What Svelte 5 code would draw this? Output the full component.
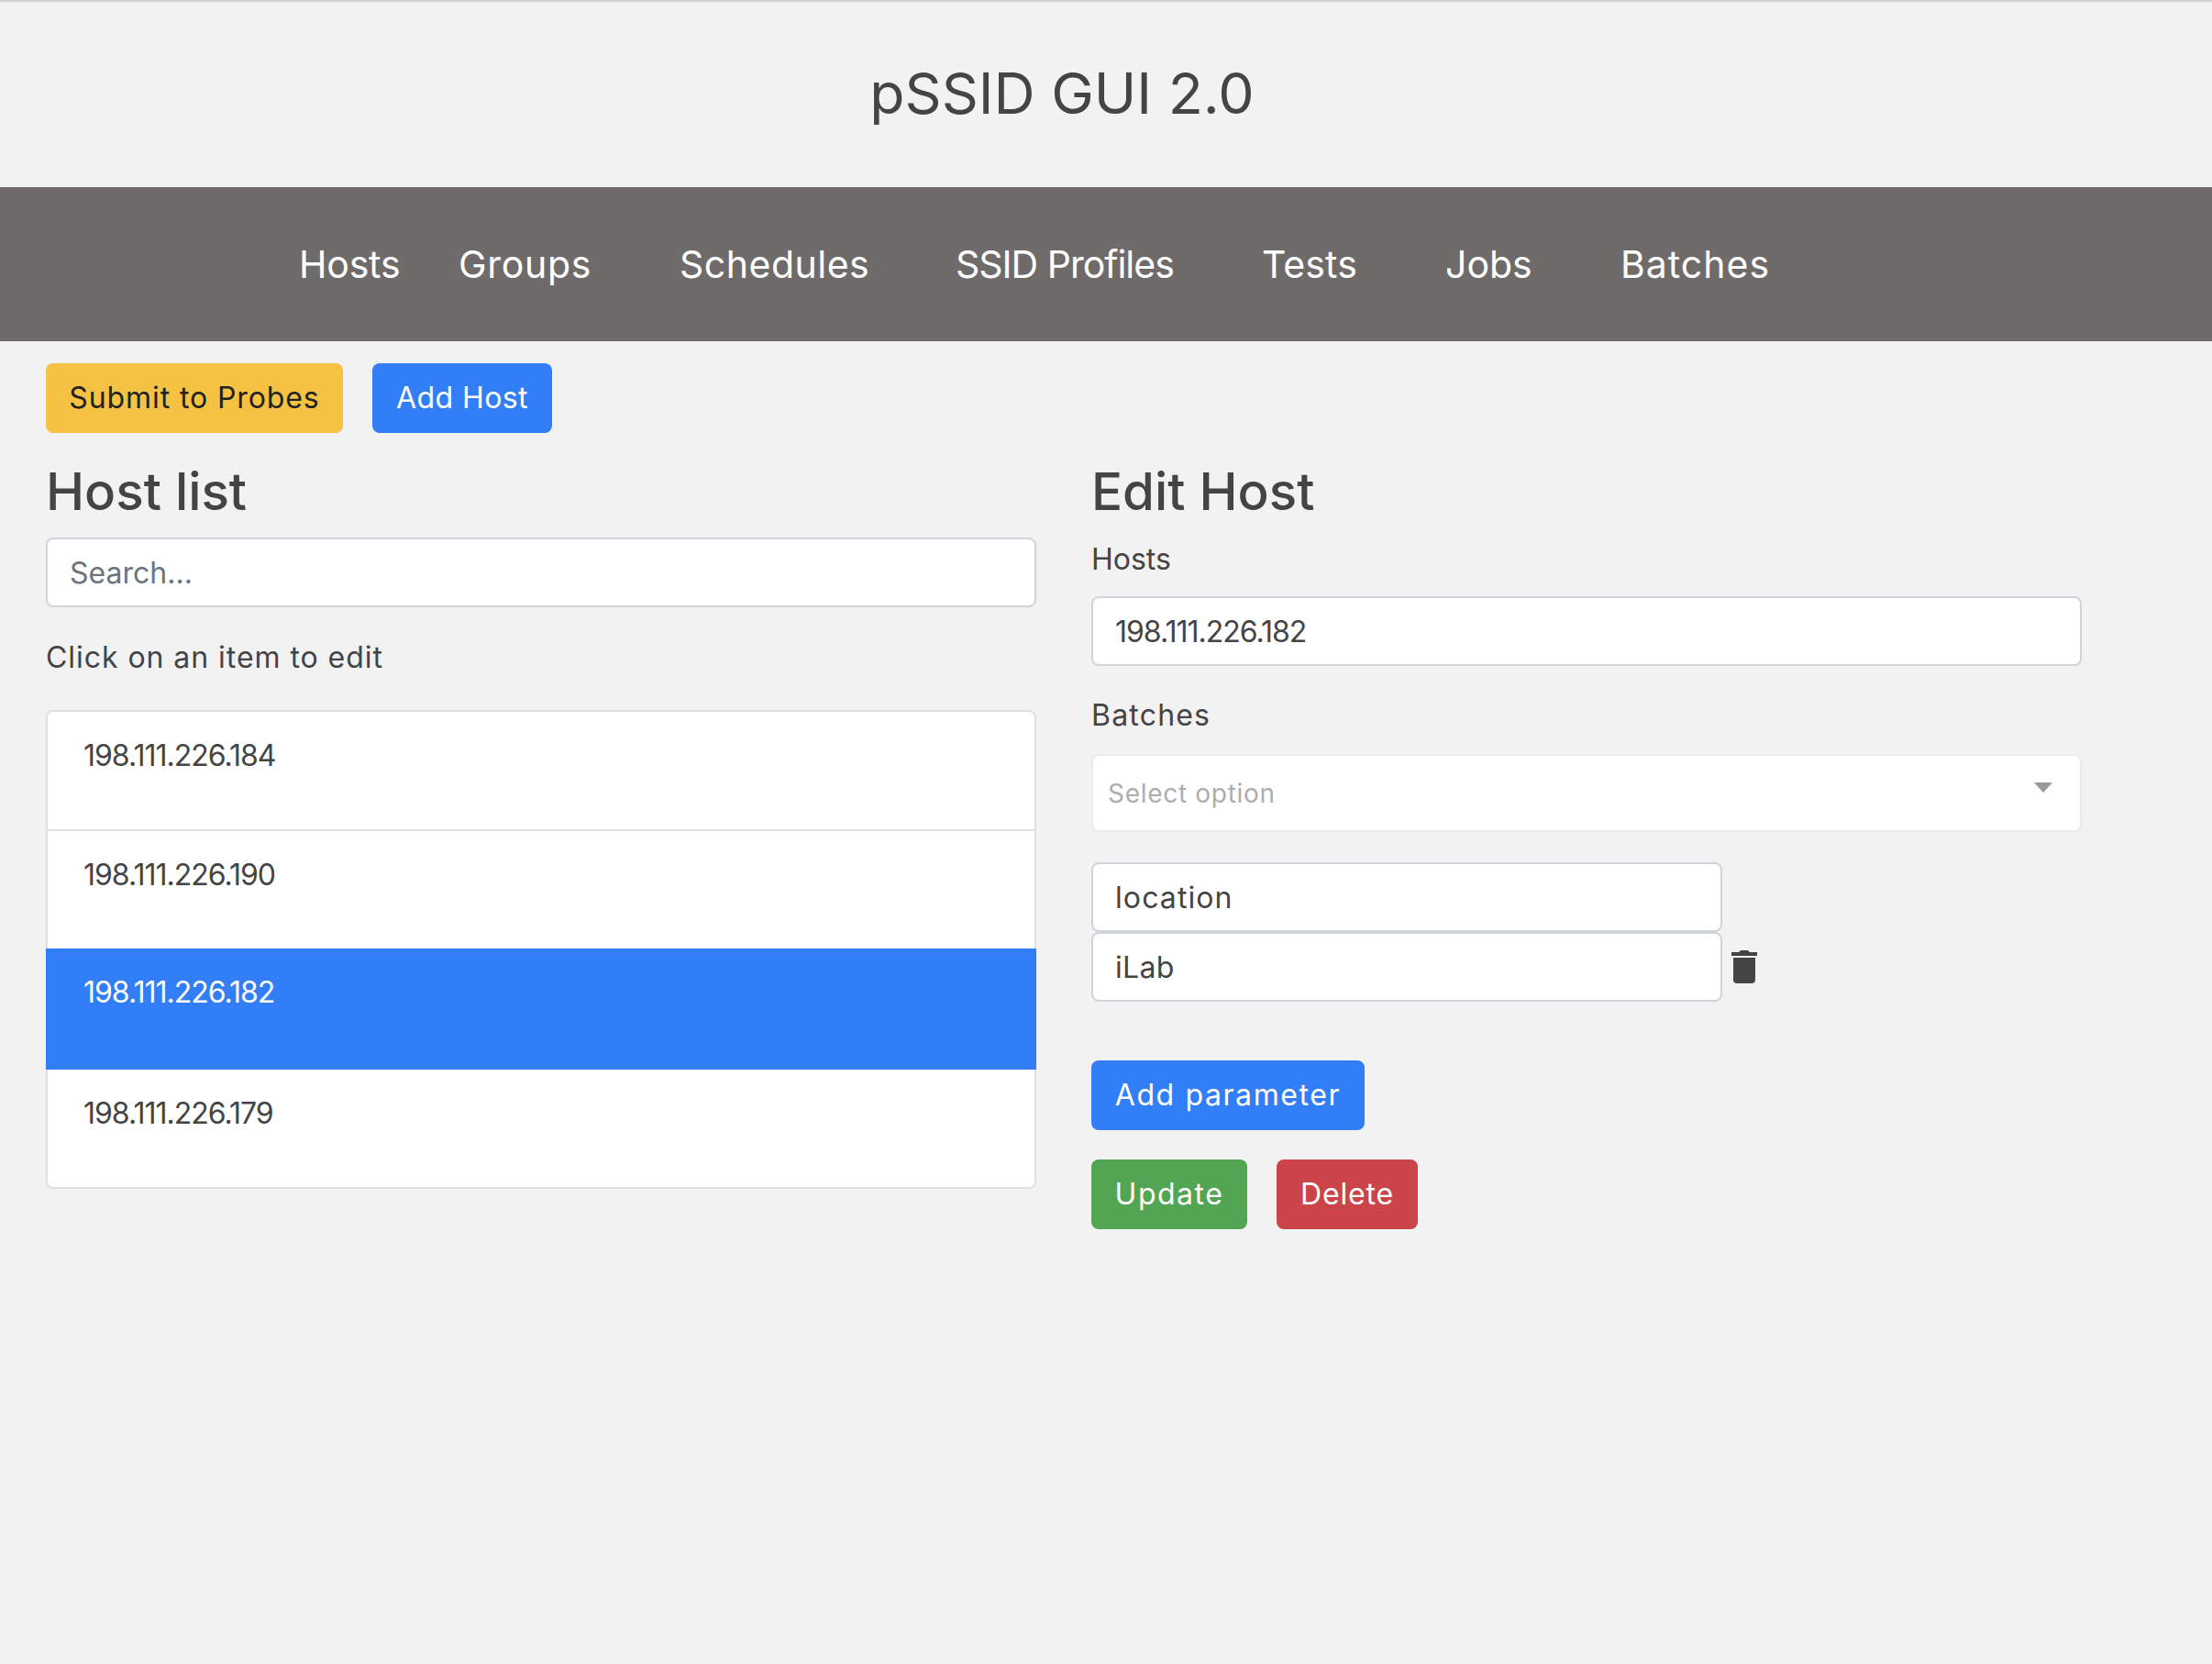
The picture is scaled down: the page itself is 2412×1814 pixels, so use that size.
<script>
  const hosts = [
    { ip: '198.111.226.184', active: false },
    { ip: '198.111.226.190', active: false },
    { ip: '198.111.226.182', active: true },
    { ip: '198.111.226.179', active: false }
  ];
  const nav = [
    { label: 'Hosts', w: 174, ls: -0.2 },
    { label: 'Groups', w: 241, ls: 0.7 },
    { label: 'Schedules', w: 301, ls: 0.5 },
    { label: 'SSID Profiles', w: 334, ls: -1 },
    { label: 'Tests', w: 200, ls: 0.1 },
    { label: 'Jobs', w: 191, ls: 0 },
    { label: 'Batches', w: 200, ls: 1 }
  ];
</script>

<div class="page">
  <header class="title"><h1>pSSID GUI 2.0</h1></header>
  <nav class="navbar">
    {#each nav as n}
      <a href="#top" style="width:{n.w}px;letter-spacing:{n.ls}px">{n.label}</a>
    {/each}
  </nav>
  <main class="content">
    <div class="actions">
      <button class="btn yellow">Submit to Probes</button>
      <button class="btn blue addh">Add Host</button>
    </div>
    <div class="cols">
      <section class="left">
        <h2>Host list</h2>
        <input class="field" placeholder="Search..." />
        <p class="hint">Click on an item to edit</p>
        <ul class="list">
          {#each hosts as h}
            <li class:active={h.active}>{h.ip}</li>
          {/each}
        </ul>
      </section>
      <section class="right">
        <h2>Edit Host</h2>
        <label class="lbl" for="hosts">Hosts</label>
        <input id="hosts" class="field ip" value="198.111.226.182" />
        <label class="lbl batches" for="batches">Batches</label>
        <div id="batches" class="select">
          <span>Select option</span>
          <i class="caret"></i>
        </div>
        <input class="field short loc" value="location" />
        <div class="param">
          <input class="field short lab" value="iLab" />
          <svg class="trash" viewBox="0 0 28 36" aria-hidden="true">
            <path fill="#444" d="M8 2 L10 0 H18 L20 2 H28 V6 H0 V2 Z M2 8 H26 V32 a4 4 0 0 1 -4 4 H6 a4 4 0 0 1 -4 -4 Z"/>
          </svg>
        </div>
        <button class="btn blue addp">Add parameter</button>
        <div class="row">
          <button class="btn green">Update</button>
          <button class="btn red">Delete</button>
        </div>
      </section>
    </div>
  </main>
</div>

<style>
  :global(body) { margin: 0; background: #f2f2f2; }
  .page {
    min-height: 1814px;
    box-sizing: border-box;
    background: #f2f2f2;
    color: #444;
    font-family: "Inter", "Open Sans", sans-serif;
    font-size: 32px;
    line-height: 48px;
  }
  .title {
    height: 204px;
    box-sizing: border-box;
    border-top: 2px solid #cfcfcf;
    display: flex;
    justify-content: center;
    padding: 54px 96px 0 0;
  }
  h1 { margin: 0; font-size: 62.5px; line-height: 90px; font-weight: 400; color: #444; }
  .navbar {
    height: 168px;
    background: #6f6b6a;
    display: flex;
    align-items: center;
    padding-left: 326px;
  }
  .navbar a { color: #fff; text-decoration: none; font-size: 41px; line-height: 60px; flex: none; }
  .content { padding: 24px 0 0 50px; }
  .actions { display: flex; gap: 32px; }
  .btn {
    height: 76px;
    box-sizing: border-box;
    border: 0;
    border-radius: 8px;
    padding: 0;
    font: inherit;
    color: #fff;
  }
  .yellow { background: #f6c244; color: #222; width: 324px; letter-spacing: 0.9px; }
  .blue { background: #327ef6; }
  .addh { width: 196px; letter-spacing: 0.4px; }
  .green { background: #52a552; width: 170px; letter-spacing: 1.5px; }
  .red { background: #cb444a; width: 154px; letter-spacing: 0.8px; }
  .cols { display: flex; gap: 60px; margin-top: 28px; }
  .left, .right { width: 1080px; display: flex; flex-direction: column; align-items: flex-start; }
  h2 { margin: 0 0 14px; font-size: 56.5px; line-height: 72px; font-weight: 500; color: #444; height: 72px; }
  .field {
    width: 1080px;
    height: 76px;
    box-sizing: border-box;
    background: #fff;
    border: 2px solid #ced4da;
    border-radius: 8px;
    padding: 0 24px;
    font: inherit;
    color: #444;
    outline: none;
  }
  .field::placeholder { color: #6c757d; opacity: 1; }
  .ip { letter-spacing: -1px; }
  .lab { letter-spacing: 0.3px; }
  .loc { letter-spacing: 1.1px; }
  .hint { margin: 31px 0 0; height: 48px; letter-spacing: 0.95px; }
  .list {
    list-style: none;
    margin: 33px 0 0;
    padding: 0;
    width: 1080px;
    box-sizing: border-box;
    background: #fff;
    border: 2px solid #e0e0e0;
    border-radius: 8px;
    letter-spacing: -1px;
  }
  .list li { height: 130px; box-sizing: border-box; padding: 24px 39px 0; }
  .list li:first-child { height: 130px; border-bottom: 2px solid #e0e0e0; border-radius: 6px 6px 0 0; }
  .list li:nth-child(2) { height: 128px; }
  .list li.active { background: #327ef6; color: #fff; margin: 0 -2px; padding-left: 41px; height: 132px; }
  .list li:last-child { height: 128px; }
  .lbl { height: 48px; }
  .lbl + .field { margin-top: 16px; }
  .lbl.batches { margin-top: 30px; letter-spacing: 1.2px; }
  .select {
    width: 1080px;
    height: 85px;
    box-sizing: border-box;
    margin-top: 18px;
    background: #fff;
    border: 2px solid #ebebeb;
    border-radius: 8px;
    padding: 0 16px;
    display: flex;
    align-items: center;
    justify-content: space-between;
    color: #adadad;
    font-size: 28px;
    letter-spacing: 0.7px;
  }
  .caret {
    width: 0;
    height: 0;
    margin: 0 14px 12px 0;
    border-left: 10px solid transparent;
    border-right: 10px solid transparent;
    border-top: 11px solid #999;
  }
  .short { width: 688px; }
  .loc { margin-top: 33px; }
  .param { display: flex; align-items: center; gap: 10px; }
  .trash { width: 28px; height: 36px; flex: none; }
  .addp { margin-top: 64px; width: 298px; letter-spacing: 1.6px; }
  .row { display: flex; gap: 32px; margin-top: 32px; }
</style>
